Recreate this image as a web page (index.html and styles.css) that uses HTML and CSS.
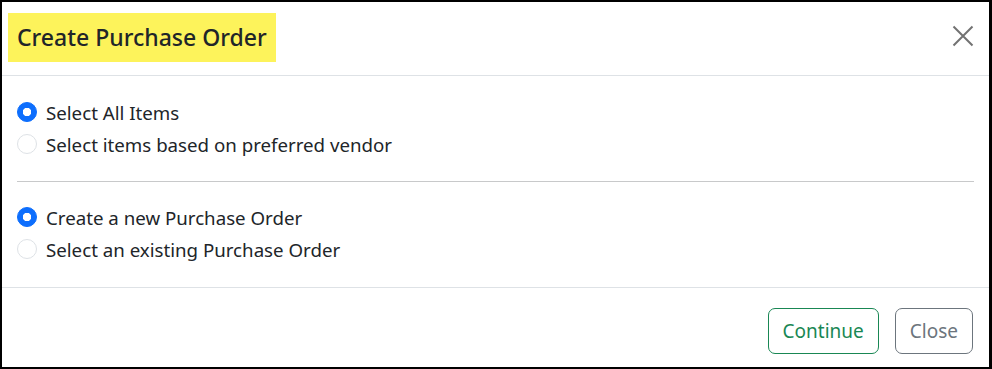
FILE: index.html
```html
<!DOCTYPE html>
<html lang="en">

<head>
  <meta charset="UTF-8" />
  <meta name="viewport" content="width=device-width, initial-scale=1.0"/>
  <title>Create Purchase Order</title>
  <link rel="stylesheet" href="styles.css">
</head>

<body>
  <div class="modal">
    <div class="modal-header">
      <h5 class="modal-title">Create Purchase Order</h5>
      <button class="btn-close" type="button" aria-label="Close">
        <svg width="22" height="22" viewBox="0 0 22 22">
          <path d="M1.5 1.5 L20.5 20.5 M20.5 1.5 L1.5 20.5" stroke="#000" stroke-width="2" fill="none" />
        </svg>
      </button>
    </div>

    <div class="modal-body">
      <div class="form-check">
        <input class="form-check-input" type="radio" name="items" id="allItems" checked>
        <label for="allItems">Select All Items</label>
      </div>
      <div class="form-check">
        <input class="form-check-input" type="radio" name="items" id="vendorItems">
        <label for="vendorItems">Select items based on preferred vendor</label>
      </div>

      <hr>

      <div class="form-check">
        <input class="form-check-input" type="radio" name="order" id="newOrder" checked>
        <label for="newOrder">Create a new Purchase Order</label>
      </div>
      <div class="form-check">
        <input class="form-check-input" type="radio" name="order" id="existingOrder">
        <label for="existingOrder">Select an existing Purchase Order</label>
      </div>
    </div>

    <div class="modal-footer">
      <button class="btn btn-outline-success" type="button">Continue</button>
      <button class="btn btn-outline-secondary" type="button">Close</button>
    </div>
  </div>
</body>

</html>
```

FILE: styles.css
```css
* {
  margin: 0;
  padding: 0;
  box-sizing: border-box;
}

body {
  font-family: "Noto Sans", "Open Sans", sans-serif;
  color: #212529;
  background-color: #ffffff;
}

.modal {
  width: 992px;
  height: 369px;
  border-style: solid;
  border-color: #000000;
  border-width: 2px 3px 2px 2px;
  display: flex;
  flex-direction: column;
}

.modal-header {
  height: 74px;
  display: flex;
  align-items: center;
  justify-content: space-between;
  padding: 0 15px 2px 6px;
  border-bottom: 1px solid #dee2e6;
}

.modal-title {
  font-size: 23px;
  font-weight: 500;
  line-height: 37px;
  padding: 6px 9px;
  background-color: #fdf35b;
}

.btn-close {
  width: 22px;
  height: 22px;
  margin-bottom: 3px;
  border: 0;
  background: transparent;
  opacity: 0.55;
  display: flex;
  cursor: pointer;
}

.modal-body {
  padding: 21px 15px 23px;
  border-bottom: 1px solid #dee2e6;
}

.form-check {
  display: flex;
  align-items: center;
  height: 30px;
  margin-bottom: 2px;
  font-size: 18.7px;
}

.form-check:last-child {
  margin-bottom: 0;
}

.form-check-input {
  appearance: none;
  width: 20px;
  height: 20px;
  margin-right: 9px;
  border: 1px solid #dee2e6;
  border-radius: 50%;
  background-color: #ffffff;
  flex-shrink: 0;
}

.form-check-input:checked {
  border-color: #0d6efd;
  background-color: #0d6efd;
  background-image: radial-gradient(circle, #ffffff 0 4px, transparent 4.5px);
}

hr {
  border: 0;
  border-top: 1px solid #c8c9ca;
  margin: 22px 0 20px;
}

.modal-footer {
  flex: 1;
  display: flex;
  justify-content: flex-end;
  align-items: flex-start;
  gap: 16px;
  padding: 20px 16px 0;
}

.btn {
  height: 46px;
  padding: 0 14px;
  font-family: inherit;
  font-size: 19px;
  background-color: transparent;
  border: 1px solid;
  border-radius: 7px;
  cursor: pointer;
}

.btn-outline-success {
  color: #198754;
  border-color: #198754;
}

.btn-outline-secondary {
  color: #6c757d;
  border-color: #6c757d;
}
```
